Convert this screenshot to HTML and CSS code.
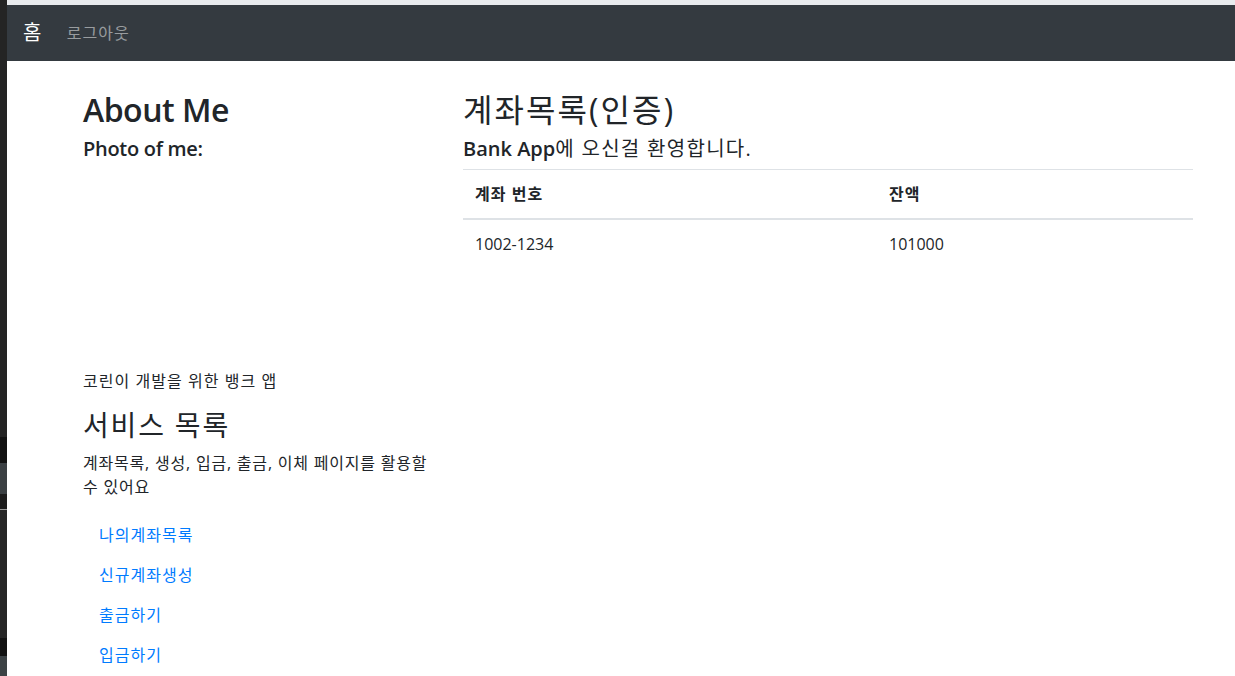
FILE: index.html
```html
<!DOCTYPE html>
<html lang="ko">
<head>
<meta charset="utf-8">
<title>Bank App</title>
<link rel="stylesheet" href="styles.css">
</head>
<body>
<div class="screen">
  <div class="strip"></div>
  <div class="page">
    <div class="topbar"></div>
    <nav class="navbar">
      <a class="brand ko" href="#">홈</a>
      <a class="nav-top ko" href="#">로그아웃</a>
    </nav>
    <div class="container">
      <div class="row">
        <div class="col-4">
          <h2 class="en">About Me</h2>
          <h5 class="en">Photo of me:</h5>
          <div class="fakeimg"></div>
          <p class="ko">코린이 개발을 위한 뱅크 앱</p>
          <h3 class="ko">서비스 목록</h3>
          <p class="ko desc">계좌목록, 생성, 입금, 출금, 이체 페이지를 활용할 수 있어요</p>
          <ul class="pills ko">
            <li><a href="#">나의계좌목록</a></li>
            <li><a href="#">신규계좌생성</a></li>
            <li><a href="#">출금하기</a></li>
            <li><a href="#">입금하기</a></li>
          </ul>
        </div>
        <div class="col-8">
          <h2 class="ko">계좌목록(인증)</h2>
          <h5>Bank App<span class="ko">에 오신걸 환영합니다.</span></h5>
          <table class="table">
            <thead>
              <tr><th class="c1 ko">계좌 번호</th><th class="ko">잔액</th></tr>
            </thead>
            <tbody>
              <tr><td>1002-1234</td><td>101000</td></tr>
            </tbody>
          </table>
        </div>
      </div>
    </div>
  </div>
</div>
</body>
</html>
```
FILE: styles.css
```css
* { box-sizing: border-box; }
html, body { margin: 0; padding: 0; }
body {
  font-family: "Open Sans", "Noto Sans CJK KR", sans-serif;
  font-size: 16px;
  line-height: 1.5;
  color: #212529;
  background: #fff;
  overflow: hidden;
}
.ko { letter-spacing: 0.065em; }
.ko.desc { letter-spacing: 0.05em; }
.en { letter-spacing: -0.015em; }
h2.ko, h3.ko, h5 .ko { font-weight: 400; }
.screen { display: flex; min-height: 676px; }
.strip {
  width: 7px;
  flex: 0 0 7px;
  background: linear-gradient(to bottom,
    #242424 0, #242424 437px,
    #121212 437px, #121212 463px,
    #3b4043 463px, #3b4043 494px,
    #1c1c1c 494px, #1c1c1c 509px,
    #9a9a9a 509px, #9a9a9a 510px,
    #262626 510px, #262626 638px,
    #121212 638px, #121212 656px,
    #3c4245 656px, #3c4245 676px);
}
.page { flex: 1; }
.topbar { height: 5px; background: #e8ebee; }
.navbar {
  display: flex;
  align-items: center;
  height: 56px;
  padding: 8px 16px;
  background: #343a40;
}
.brand {
  color: #fff;
  font-size: 20px;
  line-height: 30px;
  margin-right: 16px;
  text-decoration: none;
}
.nav-top {
  color: rgba(255,255,255,.5);
  padding: 8px;
  line-height: 24px;
  text-decoration: none;
}
.container {
  width: 1170px;
  margin-left: 61px;
  margin-top: 30px;
  padding: 0 15px;
}
.row { display: flex; margin: 0 -15px; }
.col-4 { width: 380px; padding: 0 15px; }
.col-8 { width: 760px; padding: 0 15px; }
h2, h3, h5 { margin: 0 0 8px; font-weight: 600; line-height: 1.2; }
h2 { font-size: 32px; }
h3 { font-size: 28px; }
h5 { font-size: 20px; }
p { margin: 0 0 16px; }
.fakeimg { height: 200px; }
.pills { list-style: none; margin: 0; padding: 0; display: flex; flex-direction: column; }
.pills a {
  display: block;
  padding: 8px 16px;
  color: #007bff;
  text-decoration: none;
}
.table { width: 100%; border-collapse: collapse; }
.table th, .table td {
  padding: 12px;
  text-align: left;
  vertical-align: top;
  border-top: 1px solid #dee2e6;
}
.table th { font-weight: bold; border-bottom: 2px solid #dee2e6; }
.table .c1 { width: 414px; }
```
